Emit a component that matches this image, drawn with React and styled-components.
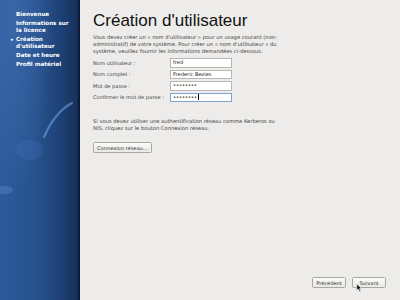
import React from "react";
import styled, { createGlobalStyle } from "styled-components";

const Global = createGlobalStyle`
  html, body {
    margin: 0;
    padding: 0;
    background: #edecea;
  }
  * { box-sizing: border-box; }
`;

const steps = [
  { label: ["Bienvenue"] },
  { label: ["Informations sur", "la licence"] },
  { label: ["Création", "d'utilisateur"], current: true },
  { label: ["Date et heure"] },
  { label: ["Profil matériel"] },
];

const fields = [
  { label: "Nom utilisateur :", value: "fred", type: "text" },
  { label: "Nom complet :", value: "Frederic Bezies", type: "text" },
  { label: "Mot de passe :", value: "secret12", type: "password" },
  { label: "Confirmer le mot de passe :", value: "secret12", type: "password", focus: true },
];

function App() {
  return (
    <Window>
      <Global />
      <Sidebar>
        <Swoosh viewBox="0 0 78 300" preserveAspectRatio="none">
          <path d="M44 137 Q55 112 72 103" stroke="rgba(120,170,230,0.55)" strokeWidth="2.2" fill="none" strokeLinecap="round" />
          <ellipse cx="30" cy="150" rx="14" ry="10" fill="rgba(100,150,220,0.12)" />
          <ellipse cx="4" cy="190" rx="9" ry="4" fill="rgba(110,160,230,0.3)" />
        </Swoosh>
        <StepList>
          {steps.map((s, i) => (
            <Step key={i} current={s.current}>
              {s.label.map((l, j) => (
                <div key={j}>{l}</div>
              ))}
            </Step>
          ))}
        </StepList>
      </Sidebar>
      <Main>
        <Title>Création d'utilisateur</Title>
        <Intro>
          Vous devez créer un « nom d'utilisateur » pour un usage courant (non-
          <br />
          administratif) de votre système. Pour créer un « nom d'utilisateur » du
          <br />
          système, veuillez fournir les informations demandées ci-dessous.
        </Intro>
        <Form>
          {fields.map((f) => (
            <React.Fragment key={f.label}>
              <Label>{f.label}</Label>
              <Field focus={f.focus}>
                {f.type === "password" ? "••••••••" : f.value}
                {f.focus && <Caret />}
              </Field>
            </React.Fragment>
          ))}
        </Form>
        <Intro>
          Si vous devez utiliser une authentification réseau comme Kerberos ou
          <br />
          NIS, cliquez sur le bouton Connexion réseau.
        </Intro>
        <ButtonRow>
          <Button>Connexion réseau...</Button>
        </ButtonRow>
        <Spacer />
        <Footer>
          <Button wide>Précédent</Button>
          <Button wide>Suivant</Button>
          <Cursor viewBox="0 0 8 12">
            <path d="M1 1 L1 10 L3 8 L5 11.5 L6.5 10.8 L4.6 7.5 L7.4 7.4 Z" fill="#111" stroke="#fff" strokeWidth="0.8" />
          </Cursor>
        </Footer>
      </Main>
    </Window>
  );
}

export default App;

const Window = styled.div`
  width: 400px;
  height: 300px;
  display: flex;
  overflow: hidden;
  font-family: "DejaVu Sans", "Liberation Sans", sans-serif;
`;

const Sidebar = styled.div`
  position: relative;
  width: 80px;
  flex-shrink: 0;
  border-right: 2px solid #0b1838;
  background:
    radial-gradient(ellipse at 15% 5%, rgba(80, 120, 190, 0.45), transparent 45%),
    linear-gradient(90deg, #2b5b9c 0%, #27538f 45%, #1e4176 78%, #162f58 100%);
`;

const Swoosh = styled.svg`
  position: absolute;
  inset: 0;
  width: 100%;
  height: 100%;
`;

const StepList = styled.div`
  position: relative;
  padding: 11px 0 0 16px;
  display: flex;
  flex-direction: column;
  gap: 2px;
`;

const Step = styled.div`
  position: relative;
  color: #ffffff;
  font-weight: bold;
  font-size: 5.6px;
  line-height: 7px;
  &::before {
    content: "${({ current }) => (current ? "▸" : "")}";
    position: absolute;
    left: -5px;
    top: 0;
    font-size: 5px;
  }
`;

const Main = styled.div`
  flex: 1;
  display: flex;
  flex-direction: column;
  padding: 11px 13px 12px 13px;
  color: #333;
`;

const Title = styled.h1`
  margin: 0;
  font-family: "Liberation Sans", Arial, sans-serif;
  font-weight: normal;
  font-size: 17px;
  line-height: 20px;
  color: #111;
`;

const Intro = styled.p`
  margin: 3px 0 0 0;
  font-size: 5.2px;
  line-height: 7px;
  color: #444;
  white-space: nowrap;
`;

const Form = styled.div`
  display: grid;
  grid-template-columns: 77px 62px;
  row-gap: 2px;
  align-items: center;
  margin: 3px 0 13px 0;
`;

const Label = styled.div`
  font-size: 5.1px;
  color: #444;
`;

const Field = styled.div`
  position: relative;
  height: 9.5px;
  background: #fff;
  border: 1px solid ${({ focus }) => (focus ? "#7fa3d1" : "#b9b7b2")};
  font-size: 5.1px;
  line-height: 7.5px;
  padding: 0 2px;
  color: #222;
  display: flex;
  align-items: center;
`;

const Caret = styled.span`
  width: 0.6px;
  height: 6px;
  background: #000;
  margin-left: 0.5px;
`;

const ButtonRow = styled.div`
  margin-top: 10px;
  display: flex;
`;

const Button = styled.div`
  height: 11px;
  padding: 0 3px;
  min-width: ${({ wide }) => (wide ? "34px" : "auto")};
  border: 1px solid #a9a7a2;
  border-radius: 1.5px;
  background: linear-gradient(#fafaf9, #e9e8e5);
  font-size: 5.1px;
  color: #333;
  display: flex;
  align-items: center;
  justify-content: center;
`;

const Spacer = styled.div`
  flex: 1;
`;

const Footer = styled.div`
  position: relative;
  display: flex;
  justify-content: flex-end;
  gap: 6px;
  padding-right: 1px;
`;

const Cursor = styled.svg`
  position: absolute;
  right: 25px;
  top: 6px;
  width: 6px;
  height: 9px;
`;
